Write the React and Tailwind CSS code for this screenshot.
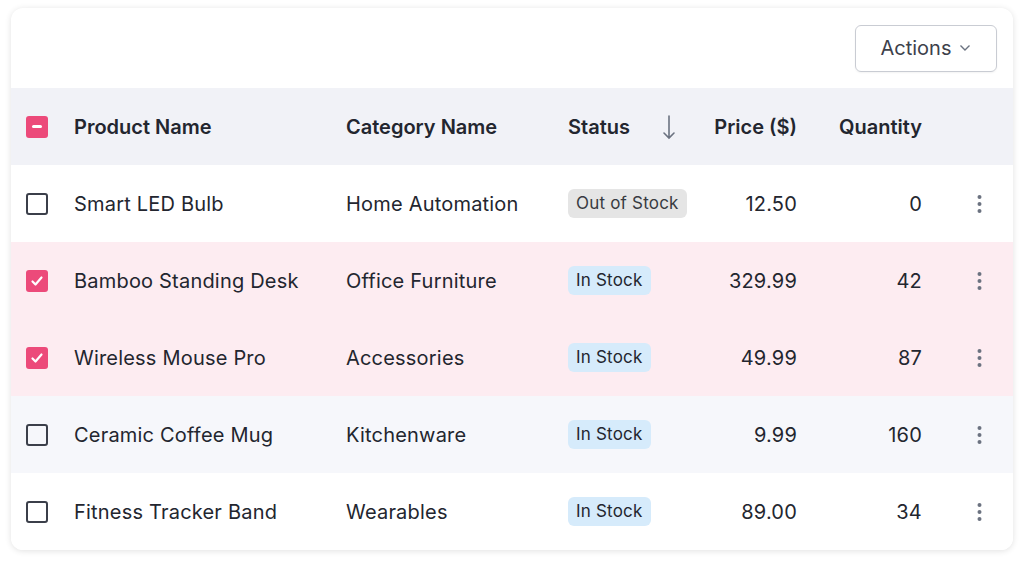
import { useState } from "react";

const rows = [
  { name: "Smart LED Bulb", cat: "Home Automation", status: "Out of Stock", price: "12.50", qty: "0", checked: false },
  { name: "Bamboo Standing Desk", cat: "Office Furniture", status: "In Stock", price: "329.99", qty: "42", checked: true },
  { name: "Wireless Mouse Pro", cat: "Accessories", status: "In Stock", price: "49.99", qty: "87", checked: true },
  { name: "Ceramic Coffee Mug", cat: "Kitchenware", status: "In Stock", price: "9.99", qty: "160", checked: false, hover: true },
  { name: "Fitness Tracker Band", cat: "Wearables", status: "In Stock", price: "89.00", qty: "34", checked: false },
];

const cols = "grid grid-cols-[63px_272px_222px_132px_97px_125px_1fr] items-center";

function Box({ checked, partial }) {
  if (checked || partial)
    return (
      <span className="w-[22px] h-[22px] rounded-[3px] bg-[#ec4a7a] flex items-center justify-center">
        {partial ? (
          <span className="w-[10px] h-[3px] bg-white rounded-sm" />
        ) : (
          <svg width="14" height="14" viewBox="0 0 14 14" fill="none" stroke="white" strokeWidth="2.2" strokeLinecap="round" strokeLinejoin="round">
            <path d="M2.5 7.5l3 3 6-7" />
          </svg>
        )}
      </span>
    );
  return <span className="w-[22px] h-[22px] rounded-[3px] border-2 border-[#3b3f4a]" />;
}

export default function App() {
  const [data] = useState(rows);
  return (
    <div className="w-[1024px] h-[563px] bg-white pt-[8px] px-[11px] font-[Inter,sans-serif] text-[#23262f]">
      <div className="rounded-xl bg-white shadow-[0_1px_6px_rgba(0,0,0,0.12)] overflow-hidden">
        <div className="h-[80px] flex items-center justify-end pr-[16px]">
          <button className="h-[47px] w-[142px] border border-[#c9ccd3] rounded-md flex items-center justify-center gap-2 text-[20px] text-[#3d414b] shadow-[0_1px_2px_rgba(0,0,0,0.05)]">
            Actions
            <svg width="12" height="8" viewBox="0 0 12 8" fill="none" stroke="#6b7280" strokeWidth="1.4"><path d="M1.5 1.5l4.5 4.5 4.5-4.5" /></svg>
          </button>
        </div>
        <div className={`${cols} h-[77px] bg-[#f1f2f7] text-[20px] font-semibold`}>
          <div className="pl-[15px] flex"><Box partial /></div>
          <div>Product Name</div>
          <div>Category Name</div>
          <div className="flex items-center justify-between pr-[24px]">
            Status
            <svg width="14" height="26" viewBox="0 0 14 26" fill="none" stroke="#6b7280" strokeWidth="1.6" strokeLinecap="round"><path d="M7 2v22M2 19l5 5 5-5" /></svg>
          </div>
          <div className="text-right">Price ($)</div>
          <div className="text-right">Quantity</div>
          <div />
        </div>
        {data.map((r) => (
          <div key={r.name} className={`${cols} h-[77px] text-[20px] tracking-[0.2px] ${r.checked ? "bg-[#fdecf1]" : r.hover ? "bg-[#f6f7fb]" : "bg-white"}`}>
            <div className="pl-[15px] flex"><Box checked={r.checked} /></div>
            <div>{r.name}</div>
            <div>{r.cat}</div>
            <div className="flex">
              <span className={`h-[29px] px-[8px] rounded-md text-[17px] flex items-center ${r.status === "In Stock" ? "bg-[#d6ebfb]" : "bg-[#e5e5e5] text-[#383b42]"}`}>{r.status}</span>
            </div>
            <div className="text-right">{r.price}</div>
            <div className="text-right">{r.qty}</div>
            <div className="flex justify-end pr-[31px]">
              <svg width="5" height="20" viewBox="0 0 5 20" fill="#6b7280"><circle cx="2.5" cy="3" r="2" /><circle cx="2.5" cy="10" r="2" /><circle cx="2.5" cy="17" r="2" /></svg>
            </div>
          </div>
        ))}
      </div>
    </div>
  );
}
